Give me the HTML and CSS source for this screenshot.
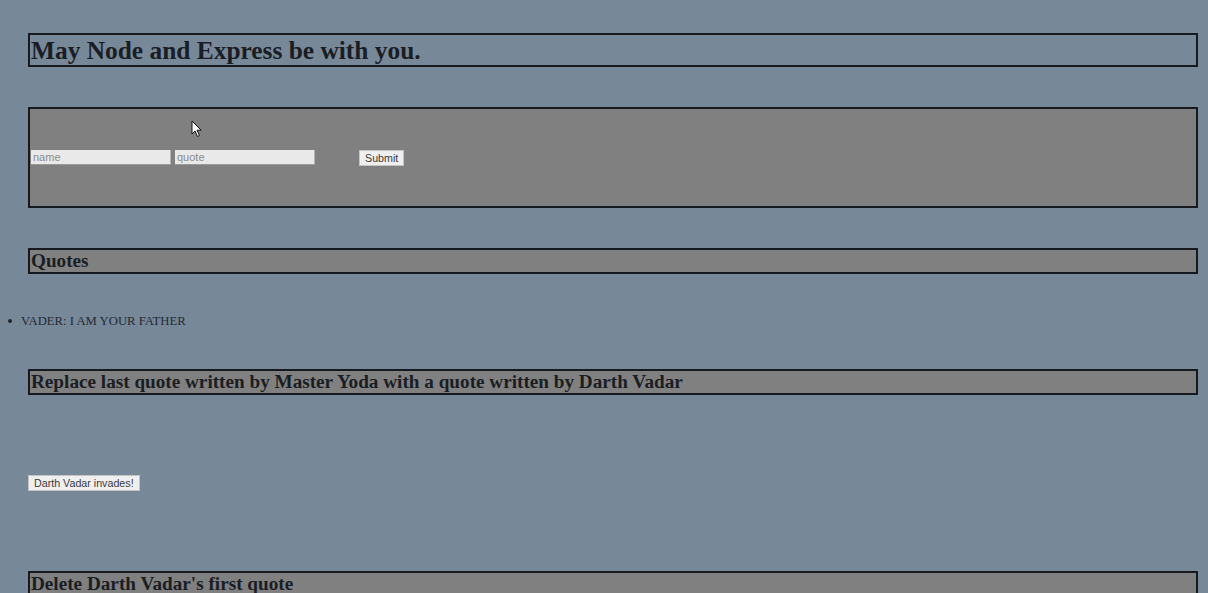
FILE: index.html
```html
<!DOCTYPE html>
<html lang="en">
<head>
<meta charset="utf-8">
<title>Star Wars Quote App</title>
<link rel="stylesheet" href="styles.css">
</head>
<body>
  <h2 class="title">May Node and Express be with you.</h2>

  <form class="quote-form">
    <input class="field" type="text" placeholder="name" name="name"><input class="field gap" type="text" placeholder="quote" name="quote"><button class="btn submit" type="submit">Submit</button>
  </form>

  <h3 class="section">Quotes</h3>
  <ul class="quotes">
    <li class="quote">VADER: I AM YOUR FATHER</li>
  </ul>

  <h3 class="section replace">Replace last quote written by Master Yoda with a quote written by Darth Vadar</h3>
  <div class="actions first">
    <button class="btn" id="update-button">Darth Vadar invades!</button>
  </div>

  <h3 class="section delete">Delete Darth Vadar's first quote</h3>
  <div class="actions">
    <button class="btn" id="delete-button">Delete Darth Vadar's quote</button>
  </div>

  <svg class="cursor" width="12" height="18" viewBox="0 0 12 18" aria-hidden="true">
    <path d="M1 1 L1 14 L4 11 L6.5 16.5 L8.5 15.5 L6 10.2 L10.2 10.2 Z" fill="#fff" stroke="#111" stroke-width="1" stroke-linejoin="round"/>
  </svg>
</body>
</html>
```
FILE: styles.css
```css
html {
  background: #778899;
}
body {
  margin: 8px;
  background: #778899;
  color: #1a1e24;
  font-family: "Liberation Serif", "Times New Roman", serif;
  position: relative;
}
.title {
  margin: 25px 2px 0 20px;
  border: 2px solid #161a1f;
  padding: 0 1px;
  font-size: 25.4px;
  line-height: 30px;
  font-weight: bold;
}
.quote-form {
  margin: 40px 2px 0 20px;
  border: 2px solid #161a1f;
  background: #808080;
  padding: 41px 1px;
  display: flex;
  align-items: center;
  height: 15px;
}
.field {
  width: 140px;
  height: 15px;
  box-sizing: border-box;
  border: none;
  border-right: 1px solid #b4b4b4;
  border-bottom: 1px solid #9a9a9a;
  background: #e9e9e9;
  padding: 0 2px;
  font-family: "Liberation Sans", Arial, sans-serif;
  font-size: 11px;
  color: #333;
  margin: 0;
}
.field::placeholder {
  color: #8c8c8c;
}
.gap {
  margin-left: 4px;
}
.btn {
  height: 16px;
  box-sizing: border-box;
  padding: 0 5px;
  border: 1px solid #c4c4c4;
  background: #efefef;
  color: #3a3a3a;
  font-family: "Liberation Sans", Arial, sans-serif;
  font-size: 10.7px;
  line-height: 14px;
  margin: 0;
}
.submit {
  margin-left: 44px;
}
.section {
  margin: 40px 2px 0 20px;
  border: 2px solid #161a1f;
  background: #808080;
  padding: 0 1px;
  font-size: 19.2px;
  line-height: 22px;
  font-weight: bold;
}
.quotes {
  margin: 39px 0 0 0;
  padding-left: 13px;
  list-style: none;
}
.quote {
  position: relative;
  font-size: 12.7px;
  line-height: 16px;
  color: #232a34;
}
.quote::before {
  content: "";
  position: absolute;
  left: -13px;
  top: 6px;
  width: 4px;
  height: 4px;
  border-radius: 50%;
  background: #1f242b;
}
.replace {
  margin-top: 40px;
}
.actions {
  display: flex;
  margin: 80px 0 0 20px;
}
.delete {
  margin-top: 80px;
}
.cursor {
  position: absolute;
  left: 183px;
  top: 112px;
}
```
